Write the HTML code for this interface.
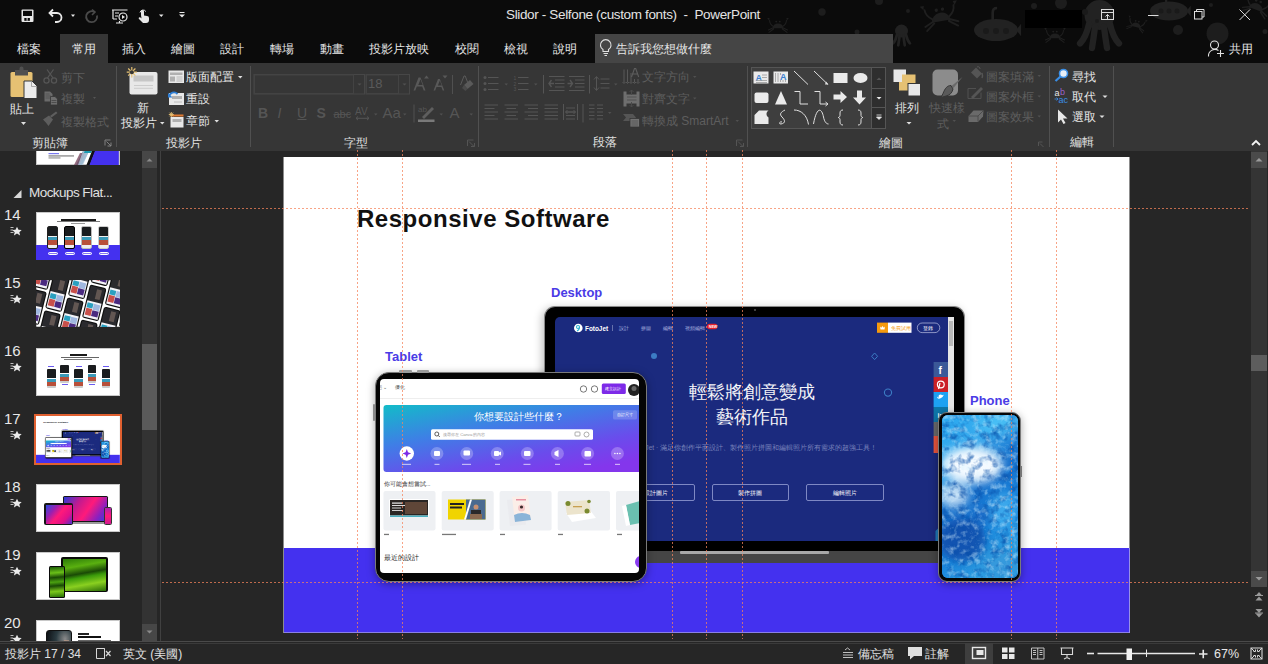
<!DOCTYPE html>
<html><head><meta charset="utf-8">
<style>
*{margin:0;padding:0;box-sizing:border-box}
html,body{width:1268px;height:664px;overflow:hidden;background:#262626;font-family:"Liberation Sans",sans-serif;color:#fff;position:relative}
.a{position:absolute}
.tab{position:absolute;top:41px;font-size:12px;font-weight:350;line-height:17px;color:#e6e6e6;white-space:pre}
.t{position:absolute;font-size:12px;font-weight:350;line-height:17px;color:#e6e6e6;white-space:pre}
.d{color:#5e5e5e}
.glab{position:absolute;top:133px;font-size:12px;font-weight:350;line-height:17px;color:#e0e0e0;white-space:pre}
.sep{position:absolute;top:66px;width:1px;height:81px;background:#505050}
.num{position:absolute;left:4px;font-size:15px;line-height:18px;color:#e8e8e8}
.thumb{position:absolute;left:36px;width:84px;height:47.5px;background:#fff;overflow:hidden;outline:1px solid #c8c8c8;outline-offset:-1px}
.ph{position:absolute;width:11px;height:23px;background:linear-gradient(180deg,#1a1c1e 0 42%,#f0f0f0 42% 48%,#3a9ab8 48% 64%,#b8503a 64% 88%,#eee 88%);border:1.2px solid #222;border-radius:2px}
.pill{position:absolute;top:39.5px;width:10px;height:3px;border:0.8px solid #fff;border-radius:1.5px;background:rgba(255,255,255,.35)}
.ph3{position:absolute;width:8.5px;height:19px;background:linear-gradient(180deg,#1a1c1e 0 45%,#fff 45% 52%,#3a9ab8 52% 66%,#b8503a 66% 90%,#ccc 90%);border-radius:1px}
.ph2{position:absolute;width:8px;height:18px;background:linear-gradient(180deg,#222 0 45%,#eee 45% 50%,#5a9ac0 50% 70%,#b05a7a 70% 90%,#ccc 90%);border:1px solid #444;border-radius:1px}
.lbl{position:absolute;font-size:13px;line-height:17px;font-weight:700;color:#4a3be6;white-space:pre}
.btn{position:absolute;top:166.8px;width:77.5px;height:17.7px;border:1px solid #7e88c4;border-radius:2px;font-size:6.4px;line-height:15.7px;text-align:center;color:#fff;white-space:pre}
</style></head><body>
<!-- TITLE BAR -->
<div class="a" style="left:0;top:0;width:1268px;height:63px;background:#0b0b0b"></div>
<svg class="a" style="left:0;top:0" width="1268" height="63" viewBox="0 0 1268 63">
 <defs>
  <g id="crab">
   <path d="M-9 2 a9 8 0 0 1 18 0z"/>
   <path d="M-8 -1 q-6 -4 -6 -10 M8 -1 q6 -4 6 -10 M-7 1 l-9 4 M-7 3 l-8 6 M7 1 l9 4 M7 3 l8 6" fill="none" stroke-width="1.8" stroke-linecap="round"/>
   <path d="M-15 -11 l-3 -4 l4 0z M15 -11 l3 -4 l-4 0z"/>
   <circle cx="-3" cy="-9" r="1.6"/><circle cx="3" cy="-9" r="1.6"/>
  </g>
  <g id="octo">
   <circle cx="0" cy="0" r="1"/>
   <path d="M-0.7 0.6 q-0.2 0.9 -0.6 1.3 M-0.3 0.8 q-0.1 0.8 -0.2 1.4 M0.3 0.8 q0.1 0.8 0.2 1.4 M0.7 0.6 q0.2 0.9 0.6 1.3" fill="none" stroke-width="0.42" stroke-linecap="round"/>
  </g>
  <g id="sub">
   <ellipse cx="0" cy="0" rx="1" ry="0.5"/>
   <path d="M0.92 0 l0.22 -0.28 v0.56z"/>
   <path d="M-0.15 -0.45 v-0.35 q0 -0.2 0.2 -0.2" fill="none" stroke-width="0.12"/>
  </g>
 </defs>
 <g fill="#1f1f1f" stroke="#1f1f1f" stroke-width="0">
  <use href="#crab" transform="translate(778 27) scale(0.6)"/>
  <use href="#crab" transform="translate(941 19) rotate(-10) scale(1.05)"/>
  <use href="#crab" transform="translate(1055 37) scale(0.6)"/>
  <use href="#crab" transform="translate(1136 26) rotate(15) scale(0.55)"/>
  <use href="#crab" transform="translate(1256 8) rotate(20) scale(0.8)"/>
 </g>
 <g fill="#222" stroke="#222" stroke-width="0">
  <use href="#octo" transform="translate(901.5 31) scale(6.5)"/>
  <use href="#octo" transform="translate(1099.5 15) scale(15)"/>
  <use href="#sub" transform="translate(996 30) scale(22)"/>
  <use href="#sub" transform="translate(1169 11) scale(19)"/>
 </g>
 <g fill="#1a1a1a">
  <circle cx="1085" cy="12" r="3"/><circle cx="1109" cy="12" r="3"/><circle cx="1097" cy="21" r="2"/>
  <circle cx="986" cy="31" r="3"/><circle cx="996" cy="31" r="3"/><circle cx="1006" cy="31" r="3"/>
  <circle cx="1161" cy="11" r="2.5"/><circle cx="1169" cy="11" r="2.5"/><circle cx="1177" cy="11" r="2.5"/>
 </g>
 <g fill="#1d1d1d">
  <circle cx="822" cy="12" r="3.7"/><circle cx="879" cy="1" r="4"/><circle cx="857" cy="32" r="2.5"/><circle cx="908" cy="11" r="2"/>
  <circle cx="1034" cy="6" r="3"/><circle cx="1061" cy="3" r="6"/><circle cx="1178" cy="30" r="5"/><circle cx="1217.5" cy="33.5" r="11"/>
  <circle cx="1211" cy="5" r="2"/><circle cx="1265" cy="31.5" r="2.5"/>
 </g>
</svg>
<!-- QAT -->
<svg class="a" style="left:20px;top:8px" width="170" height="16" viewBox="0 0 170 16">
 <g fill="none" stroke="#e8e8e8" stroke-width="1.3">
  <!-- save -->
  <rect x="1.5" y="1.5" width="12" height="12.5" rx="1" fill="#e8e8e8" stroke="none"/>
  <rect x="3" y="2.8" width="9" height="5.2" fill="#0b0b0b" stroke="none"/>
  <rect x="4.3" y="10" width="5.6" height="2.8" fill="#0b0b0b" stroke="none"/>
  <rect x="6.6" y="10" width="1" height="2.8" fill="#e8e8e8" stroke="none"/>
  <!-- undo -->
  <path d="M30 5 h7 a4.5 4.5 0 0 1 0 9 h-2" stroke-width="1.8"/>
  <path d="M33 1.5 l-3.5 3.5 l3.5 3.5" stroke-width="1.8"/>
  <path d="M51 6.5 h4 l-2 2.5z" fill="#e8e8e8" stroke="none"/>
  <!-- redo gray -->
  <path d="M74.5 4 a5.5 5.5 0 1 0 2.5 3.5" stroke="#4a4a4a" stroke-width="1.8"/>
  <path d="M72 1.5 l3 2.5 l-3 3" stroke="#4a4a4a" stroke-width="1.6"/>
  <!-- presenter -->
  <path d="M92 2 h15.5 M93 2 v9 M93 11 h4 M99.5 13 v2 M96 15 h7" stroke-width="1.2"/>
  <path d="M95 5 h4 M95 8 h3" stroke-width="1"/>
  <circle cx="103" cy="9" r="4" stroke-width="1.2"/>
  <path d="M102 7 v4 l3 -2z" fill="#e8e8e8" stroke="none"/>
  <!-- touch -->
  <path d="M121 7 v-3.5 a1.5 1.5 0 0 1 3 0 v4 l3 0.5 a2 2 0 0 1 2 2 v2 a3 3 0 0 1 -3 3 h-3 l-4 -4 a1 1 0 0 1 1.5 -1.5 l1 1z" fill="#e8e8e8" stroke="none"/>
  <path d="M120 4.5 a3.2 3.2 0 0 1 5.8 -1" stroke-width="1"/>
  <path d="M139 6.5 h4.5 l-2.25 2.5z" fill="#e8e8e8" stroke="none"/>
  <!-- customize -->
  <path d="M159.5 4.5 h5" stroke-width="1"/>
  <path d="M159 6.5 h6 l-3 3z" fill="#e8e8e8" stroke="none"/>
 </g>
</svg>
<div class="a" style="left:506px;top:7px;font-size:13.5px;letter-spacing:-0.35px;color:#e4e4e4;white-space:pre">Slidor - Selfone (custom fonts)  -  PowerPoint</div>
<div class="a" style="left:1025px;top:10px;width:57px;height:18px;background:#000"></div>
<svg class="a" style="left:1095px;top:5px" width="165" height="22" viewBox="0 0 165 22">
 <g fill="none" stroke="#dcdcdc" stroke-width="1">
  <rect x="6.5" y="4.5" width="12" height="10"/>
  <path d="M7 7.5 h11 M12.5 14 v-4.5 M10.5 11.5 l2 -2 l2 2"/>
  <path d="M53 10.5 h10.5"/>
  <rect x="99.5" y="6.5" width="7.5" height="7.5"/>
  <path d="M101.5 6.5 v-2 h7.5 v7.5 h-2"/>
  <path d="M144.5 4.5 l10.5 10.5 M155 4.5 l-10.5 10.5"/>
 </g>
</svg>
<!-- TABS -->
<div class="a" style="left:60px;top:34px;width:48px;height:29px;background:#363636"></div>
<div class="a" style="left:595px;top:34px;width:298px;height:29px;background:#454545"></div>
<div class="tab" style="left:17px">檔案</div>
<div class="tab" style="left:72px">常用</div>
<div class="tab" style="left:122px">插入</div>
<div class="tab" style="left:171px">繪圖</div>
<div class="tab" style="left:220px">設計</div>
<div class="tab" style="left:270px">轉場</div>
<div class="tab" style="left:320px">動畫</div>
<div class="tab" style="left:369px">投影片放映</div>
<div class="tab" style="left:455px">校閱</div>
<div class="tab" style="left:504px">檢視</div>
<div class="tab" style="left:553px">說明</div>
<svg class="a" style="left:598px;top:39px" width="16" height="19" viewBox="0 0 16 19">
 <g fill="none" stroke="#e0e0e0" stroke-width="1.1">
  <path d="M5 12.5 v-2 a5.3 5.3 0 1 1 5.5 0 v2z"/>
  <path d="M5.5 14.5 h4.5 M6.5 16.5 h2.5"/>
 </g>
</svg>
<div class="tab" style="left:616px">告訴我您想做什麼</div>
<svg class="a" style="left:1206px;top:39px" width="20" height="20" viewBox="0 0 20 20">
 <g fill="none" stroke="#e0e0e0" stroke-width="1.1">
  <circle cx="8.5" cy="6" r="4"/>
  <path d="M2.5 17.5 a6.5 6.5 0 0 1 10 -6"/>
  <path d="M14.5 11 v7 M11 14.5 h7"/>
 </g>
</svg>
<div class="tab" style="left:1229px">共用</div>
<!-- RIBBON -->
<div class="a" style="left:0;top:63px;width:1268px;height:88px;background:#363636"></div>
<div class="sep" style="left:116px"></div>
<div class="sep" style="left:250px"></div>
<div class="sep" style="left:478px"></div>
<div class="sep" style="left:747px"></div>
<div class="sep" style="left:1049px"></div>
<div class="sep" style="left:1113px"></div>
<svg class="a" style="left:0;top:63px" width="1268" height="88" viewBox="0 63 1268 88">
 <!-- clipboard paste -->
 <rect x="10.5" y="72" width="22" height="25" rx="1.5" fill="#e6c173"/>
 <path d="M15 70 h4.5 v-1.5 a2 2 0 0 1 4 0 v1.5 h4.5 v5.5 h-13z" fill="#505050"/>
 <path d="M24 81 h8 l5 5 v12.5 h-13z" fill="#ececec" stroke="#363636" stroke-width="1"/>
 <path d="M31.5 81 v5.5 h5.5" fill="none" stroke="#9a9a9a" stroke-width="0.8"/>
 <path d="M21 122 h5 l-2.5 3z" fill="#e0e0e0"/>
 <!-- scissors -->
 <g fill="none" stroke="#555" stroke-width="1.3">
  <circle cx="46.5" cy="80.5" r="2.6"/><circle cx="54" cy="80.5" r="2.6"/>
  <path d="M47.5 78 l6 -8.5 M53 78 l-6 -8.5"/>
 </g>
 <!-- copy -->
 <path d="M44.5 91.5 h5.5 l2.5 2.5 v7.5 h-8z" fill="#6a6a6a"/>
 <path d="M45.5 94 h4 M45.5 96 h5.5 M45.5 98 h5.5" stroke="#4a4a4a" stroke-width="0.7"/>
 <path d="M50.5 96.5 h4.5 l2.5 2.5 v6 h-7z" fill="#6e6e6e" stroke="#363636" stroke-width="0.8"/>
 <path d="M51.5 100.5 h5 M51.5 102.5 h5" stroke="#444" stroke-width="0.8"/>
 <path d="M93 97 h3 l-1.5 2z" fill="#555"/>
 <!-- format painter -->
 <path d="M43 119.5 l6 -4 l4 4 l-4.5 6.5 q-2 -3 -5.5 -6.5z" fill="#5e5e5e"/>
 <path d="M50 116 l1.5 1.5 l6 -4.5 l-1.5 -1.5z" fill="#5e5e5e"/>
 <!-- new slide -->
 <rect x="129.5" y="72" width="28" height="22.5" rx="2" fill="#e8e8e8"/>
 <rect x="133.5" y="75.5" width="20" height="6" fill="#c6c6c6"/>
 <path d="M134 85.5 h19 M134 88.3 h19" stroke="#c8c8c8" stroke-width="0.9"/>
 <g stroke="#e6c173" stroke-width="1.2">
  <path d="M131.8 67 v10.5 M126.7 72.2 h10.2 M128.2 68.5 l7.2 7.2 M135.4 68.5 l-7.2 7.2"/>
 </g>
 <circle cx="131.8" cy="72.2" r="2" fill="#363636"/>
 <path d="M160 122 h4.5 l-2.25 2.5z" fill="#e0e0e0"/>
 <!-- layout -->
 <rect x="168.5" y="70.5" width="15.5" height="12.5" fill="#e8e8e8"/>
 <rect x="170" y="72.5" width="12.5" height="2.5" fill="#b0b0b0"/>
 <rect x="170" y="76.5" width="5" height="5" fill="#b0b0b0"/>
 <path d="M176.5 77 h6 M176.5 79 h6 M176.5 81 h6" stroke="#b0b0b0" stroke-width="0.8"/>
 <path d="M238 76 h4.5 l-2.25 2.5z" fill="#e0e0e0"/>
 <!-- reset -->
 <rect x="169" y="93" width="15" height="12" fill="#e8e8e8"/>
 <rect x="172" y="96" width="10" height="3" fill="#b0b0b0"/>
 <path d="M174 102 h8" stroke="#b0b0b0" stroke-width="0.8"/>
 <path d="M169 96.5 a5 5 0 0 1 8.5 -2.5" fill="none" stroke="#2f7fd6" stroke-width="1.8"/>
 <path d="M168 93 v4.5 h4.5z" fill="#2f7fd6"/>
 <!-- section -->
 <rect x="170.5" y="117" width="13" height="10.5" fill="#e8e8e8"/>
 <rect x="170.5" y="114.5" width="13" height="2" fill="#e07a32"/>
 <rect x="172.5" y="119" width="9" height="3" fill="#b0b0b0"/>
 <g stroke="#e6c173" stroke-width="0.9"><path d="M171.3 112 v5 M168.8 114.5 h5 M169.5 112.7 l3.6 3.6 M173.1 112.7 l-3.6 3.6"/></g>
 <path d="M214.5 120 h4.5 l-2.25 2.5z" fill="#e0e0e0"/>
 <!-- font name / size boxes -->
 <rect x="254" y="74.5" width="110.5" height="19.5" fill="#363636" stroke="#474747" stroke-width="1"/>
 <rect x="254.5" y="75" width="99" height="18.5" fill="none" stroke="#434343" stroke-width="1"/>
 <path d="M357.5 83.5 h4 l-2 2z" fill="#505050"/>
 <rect x="366" y="74.5" width="43.5" height="19.5" fill="#363636" stroke="#474747" stroke-width="1"/>
 <rect x="366.5" y="75" width="32" height="18.5" fill="none" stroke="#434343" stroke-width="1"/>
 <path d="M402.5 83.5 h4 l-2 2z" fill="#505050"/>
 <!-- grow/shrink -->
 <g fill="#585858">
  <path d="M413.5 90.5 l5 -13 h2 l5 13 h-1.8 l-1.5 -4 h-5.4 l-1.5 4z M418.3 85 h4.4 l-2.2 -5.8z"/>
  <path d="M424 78.5 l2.5 -3 l2.5 3z"/>
  <path d="M433.5 90.5 l4.5 -11.5 h1.8 l4.5 11.5 h-1.6 l-1.3 -3.5 h-4.9 l-1.3 3.5z M437.9 85.6 h3.9 l-1.95 -5z"/>
  <path d="M442.5 75.5 h5 l-2.5 3z"/>
 </g>
 <rect x="452" y="75" width="1" height="19" fill="#505050"/>
 <!-- clear formatting -->
 <path d="M460.5 85 l3.5 -9 h1.2 l3.5 9" fill="none" stroke="#5a5a5a" stroke-width="1"/>
 <path d="M464 85 l6 -5 l3.5 4 l-6 5z" fill="#5a5a5a"/>
 <path d="M462 88 l2 -3 l3.5 4 l-2 2z" fill="#4a4a4a"/>
 <!-- B I U S abc AV Aa -->
 <g fill="#555" font-family="Liberation Sans" >
  <text x="258" y="118" font-size="14" font-weight="700">B</text>
  <text x="277.5" y="118" font-size="14" font-style="italic">I</text>
  <text x="297" y="118" font-size="14">U</text>
  <text x="316.5" y="118" font-size="14" font-weight="700">S</text>
  <text x="333.5" y="118" font-size="11">abc</text>
  <text x="355" y="114.5" font-size="10">AV</text>
  <text x="382.5" y="118" font-size="15">Aa</text>
  <text x="449.5" y="118" font-size="15">A</text>
 </g>
 <rect x="297.5" y="119" width="9" height="1" fill="#555"/>
 <path d="M333.5 114.5 h17" stroke="#555" stroke-width="0.8"/>
 <path d="M356 118.3 h13 M356 118.3 l2 -1.8 M356 118.3 l2 1.8 M369 118.3 l-2 -1.8 M369 118.3 l-2 1.8" stroke="#555" stroke-width="1" fill="none"/>
 <g fill="#505050">
  <path d="M374 113.5 h3.5 l-1.75 2z"/><path d="M403 113.5 h3.5 l-1.75 2z"/>
  <path d="M439.5 113.5 h3.5 l-1.75 2z"/><path d="M469.5 113.5 h3.5 l-1.75 2z"/>
 </g>
 <rect x="413.5" y="104.5" width="1" height="18" fill="#505050"/>
 <!-- highlighter -->
 <text x="418" y="112" font-size="8" fill="#555" font-family="Liberation Sans">ab</text>
 <path d="M422 117 l10 -10 l2 2 l-10 10z" fill="#5e5e5e"/>
 <rect x="418" y="119.5" width="16.5" height="2.5" fill="#7a7a7a"/>
 <!-- paragraph: bullets -->
 <g fill="#555">
  <circle cx="485" cy="77.5" r="1.5"/><circle cx="485" cy="83.5" r="1.5"/><circle cx="485" cy="89.5" r="1.5"/>
 </g>
 <g stroke="#555" stroke-width="1" fill="none">
  <path d="M488 77.5 h10.5 M488 83.5 h10.5 M488 89.5 h10.5"/>
  <path d="M518 77.5 h10.5 M518 83.5 h10.5 M518 89.5 h10.5"/>
  <!-- indents -->
  <path d="M549 76.5 h15.5 M555 80 h9.5 M555 83.5 h9.5 M555 87 h9.5 M549 90.5 h15.5"/>
  <path d="M569 76.5 h15.5 M575 80 h9.5 M575 83.5 h9.5 M575 87 h9.5 M569 90.5 h15.5"/>
  <!-- line spacing -->
  <path d="M600.5 79 h9 M600.5 83.5 h9 M600.5 88 h9"/>
  <path d="M596.5 77 v13"/>
  <!-- align -->
  <path d="M484.5 105 h13.5 M484.5 108.5 h10 M484.5 112 h13.5 M484.5 115.5 h10 M484.5 119 h13.5"/>
  <path d="M504.5 105 h13.5 M506.5 108.5 h9.5 M504.5 112 h13.5 M506.5 115.5 h9.5 M504.5 119 h13.5"/>
  <path d="M524.5 105 h13.5 M528 108.5 h10 M524.5 112 h13.5 M528 115.5 h10 M524.5 119 h13.5"/>
  <path d="M544.5 105 h13.5 M544.5 108.5 h13.5 M544.5 112 h13.5 M544.5 115.5 h13.5 M544.5 119 h13.5"/>
  <path d="M563.5 104 v16 M577.5 104 v16 M566 108 h9 M566 112 h9 M566 115.5 h9 M566 119 h9"/>
  <path d="M589 105 h5.5 M589 108.5 h5.5 M589 112 h5.5 M589 115.5 h5.5 M589 119 h5.5 M597 105 h6 M597 108.5 h6 M597 112 h6 M597 115.5 h6 M597 119 h6"/>
  <path d="M543.5 75 v18.5 M589.5 75 v18.5 M583 104 v18.5"/>
 </g>
 <text x="513.5" y="79.5" font-size="5" fill="#555" font-family="Liberation Sans">1</text>
 <text x="513.5" y="85.5" font-size="5" fill="#555" font-family="Liberation Sans">2</text>
 <text x="513.5" y="91" font-size="5" fill="#555" font-family="Liberation Sans">3</text>
 <path d="M551.5 80 l-2.5 3.5 l2.5 3.5 M549 83.5 h5" stroke="#555" stroke-width="1.4" fill="none"/>
 <path d="M570 80 l2.5 3.5 l-2.5 3.5 M567.5 83.5 h5" stroke="#555" stroke-width="1.4" fill="none"/>
 <path d="M594 79.5 l2.5 -3 l2.5 3 M594 87.5 l2.5 3 l2.5 -3" stroke="#555" stroke-width="1" fill="none"/>
 <path d="M565.5 112 h10 M565.5 112 l2 -2 M565.5 112 l2 2 M575.5 112 l-2 -2 M575.5 112 l-2 2" stroke="#555" stroke-width="1" fill="none"/>
 <g fill="#505050">
  <path d="M504.5 83.5 h3.5 l-1.75 2z"/><path d="M534 83.5 h3.5 l-1.75 2z"/><path d="M614 83.5 h3.5 l-1.75 2z"/><path d="M608 112 h3.5 l-1.75 2z"/>
  <path d="M693 76 h3.5 l-1.75 2z"/><path d="M693 97.5 h3.5 l-1.75 2z"/><path d="M735.5 120 h3.5 l-1.75 2z"/>
 </g>
 <!-- text direction -->
 <g stroke="#585858" stroke-width="1" fill="none"><path d="M624 69.5 v13 M627.5 69.5 v13 M631 73 v9.5 M634.5 79 v3.5 M638 79 v3.5"/>
 <path d="M622.5 82 l1.5 1.5 l1.5 -1.5 M626 82 l1.5 1.5 l1.5 -1.5 M629.5 82 l1.5 1.5 l1.5 -1.5 M633 82 l1.5 1.5 l1.5 -1.5 M636.5 82 l1.5 1.5 l1.5 -1.5"/></g>
 <path d="M631.5 77 l3 -8.5 h1.2 l3 8.5 M632.8 74 h4.5" stroke="#5e5e5e" stroke-width="1.1" fill="none"/>
 <!-- align text -->
 <path d="M623.5 91.5 h3 v3 h10 v-3 h3 v15 h-3 v-3 h-10 v3 h-3z" fill="#6e6e6e"/>
 <path d="M627 97 h9.5 M627 100 h9.5" stroke="#4a4a4a" stroke-width="0.8"/>
 <path d="M631.5 90 v5 M629.5 92 l2 -2 l2 2 M631.5 102 v5 M629.5 105 l2 2 l2 -2" stroke="#4a4a4a" stroke-width="1" fill="none"/>
 <!-- smartart -->
 <path d="M623 114 h10 l3 3.5 l-3 3.5 h-10 l3 -3.5z" fill="#555"/>
 <rect x="630" y="118.5" width="9.5" height="8.5" fill="#727272" stroke="#363636" stroke-width="0.8"/>
 <path d="M631.5 121 h6.5 M631.5 123 h6.5 M631.5 125 h6.5" stroke="#505050" stroke-width="0.7"/>
 <!-- launchers -->
 <g fill="none" stroke="#8a8a8a" stroke-width="0.9">
  <path d="M105 145.5 v-5.5 h5.5 M106.5 141.5 l4.5 4.5 M111 142.5 v3.5 h-3.5"/>
 </g>
 <g fill="none" stroke="#585858" stroke-width="0.9">
  <path d="M467.5 146 v-6 h6 M469 141.5 l5 5 M474.5 143 v3.5 h-3.5"/>
  <path d="M736.5 146 v-6 h6 M738 141.5 l5 5 M743.5 143 v3.5 h-3.5"/>
  <path d="M1038.5 146 v-4 h4 M1040 143.5 l3.5 3.5"/>
 </g>
 <!-- shapes gallery -->
 <rect x="751.5" y="67.5" width="134" height="61" fill="#3e3e3e" stroke="#555" stroke-width="1"/>
 <rect x="871.5" y="67.5" width="14" height="61" fill="#2e2e2e" stroke="#555" stroke-width="1"/>
 <path d="M871.5 88.5 h14 M871.5 107.5 h14" stroke="#555"/>
 <path d="M876.5 80 h5 l-2.5 -2.5z" fill="#555"/>
 <path d="M876.5 97 h5 l-2.5 2.5z" fill="#e8e8e8"/>
 <path d="M876.5 115 h5 M876.5 117 h5 l-2.5 2.5z" fill="#e8e8e8" stroke="#e8e8e8" stroke-width="0.8"/>
 <g fill="#eaeaea">
  <rect x="753.5" y="71.5" width="15" height="12"/>
  <rect x="773.5" y="71.5" width="14.5" height="12"/>
  <rect x="833.5" y="73" width="14" height="10"/>
  <ellipse cx="860.5" cy="78" rx="7" ry="5"/>
  <rect x="754.5" y="92.5" width="14" height="10.5" rx="2"/>
  <path d="M775 104.5 l6 -13.5 l6 13.5z"/>
  <path d="M833.5 94.5 h7 v-3.5 l6.5 6 l-6.5 6 v-3.5 h-7z"/>
  <path d="M857 90.5 h5 v7 h4 l-6.5 7 l-6.5 -7 h4z"/>
  <path d="M754.5 124 v-9 l4.5 -4.5 h9.5 a4 4 0 0 0 0 7 v6.5z"/>
 </g>
 <text x="755.5" y="81" font-size="9" font-weight="700" fill="#3a7fd0" font-family="Liberation Sans">A</text>
 <text x="780" y="80" font-size="9" font-weight="700" fill="#3a7fd0" font-family="Liberation Sans">A</text>
 <g stroke="#9a9a9a" stroke-width="0.8" fill="none">
  <path d="M762 75 h5 M762 77.5 h5 M756 80.5 h11 M756 82.5 h11"/>
  <path d="M775.5 73 v9 M778 73 v9 M780.5 73 v2 M780.5 80 v2 M783 80 v2 M785.5 80 v2"/>
 </g>
 <g stroke="#e0e0e0" stroke-width="1" fill="none">
  <path d="M794 71 l14 13.5"/>
  <path d="M814 71 l14 13.5"/>
  <path d="M794.5 91.5 h5.5 v12.5 h8"/>
  <path d="M814.5 91.5 h5.5 v12.5 h7.5 M825.5 102 l2.5 2 l-2.5 2"/>
  <path d="M785 110 c-4 2 -6 4 -3 7 c3 3 4 6 -1 7 c-3 0 -1 -3 1 -2"/>
  <path d="M794 110 c7 0 13 5 14.5 14.5"/>
  <path d="M813.5 124 c3 -17 8 -17 10 -7 c1 5 3 7 5 7"/>
  <path d="M843 110 c-2 0 -3 1 -3 3 v2.5 c0 1 -1 2 -2 2 c1 0 2 1 2 2 v2.5 c0 2 1 3 3 3"/>
  <path d="M858 110 c2 0 3 1 3 3 v2.5 c0 1 1 2 2 2 c-1 0 -2 1 -2 2 v2.5 c0 2 -1 3 -3 3"/>
 </g>
 <path d="M826 81.5 l2.5 3 l-3.5 0z" fill="#e0e0e0"/>
 <!-- arrange -->
 <rect x="893.5" y="69.5" width="12.5" height="12.5" fill="#e8e8e8"/>
 <rect x="902" y="74.5" width="13.5" height="9.5" fill="#e6c173"/>
 <rect x="899" y="83" width="9.5" height="7.5" fill="#e6c173"/>
 <rect x="908" y="83.5" width="12.5" height="12.5" fill="#e8e8e8" stroke="#363636" stroke-width="1"/>
 <rect x="899" y="82" width="3" height="1" fill="#e6c173"/>
 <path d="M906.5 122 h5 l-2.5 2.5z" fill="#e0e0e0"/>
 <!-- quick styles -->
 <rect x="932.5" y="69.5" width="25.5" height="26" rx="5" fill="#8c8c8c"/>
 <path d="M962.5 77 l-9 11 l-2 -2z" fill="#6a6a6a"/>
 <path d="M951 85.5 c-4 0 -6 3 -8 8 l-2 4 l5 -1.5 c4 -1 6 -3 7 -7z" fill="#5a5a5a" stroke="#363636" stroke-width="1"/>
 <path d="M952.5 120 h3.5 l-1.75 2z" fill="#505050"/>
 <!-- fill/outline/effects -->
 <path d="M971 72.5 l5 -5 l6 6 l-5 5z" fill="#555"/>
 <path d="M977 67 a2 2 0 0 1 3 2" fill="none" stroke="#555" stroke-width="1"/>
 <path d="M982 73 q1 3 0 5" fill="none" stroke="#555" stroke-width="1.5"/>
 <path d="M968 98.5 v-10 h8 M968 98.5 h13 v-6" fill="none" stroke="#505050" stroke-width="1"/>
 <path d="M971 97 l10 -10 l2 2 l-10 10z" fill="#555"/>
 <path d="M968.5 116 l5 -5.5 h10 l-0.5 6 l-5 5.5 h-9.5z" fill="#6a6a6a"/>
 <path d="M968.5 116 h9.5 l5.5 -5.5 M978 116 v5.5" fill="none" stroke="#454545" stroke-width="0.8"/>
 <g fill="#505050"><path d="M1037.5 75 h3.5 l-1.75 2z"/><path d="M1037.5 95.5 h3.5 l-1.75 2z"/><path d="M1037.5 115.5 h3.5 l-1.75 2z"/></g>
 <!-- find/replace/select -->
 <circle cx="1063.5" cy="73.5" r="4" fill="#e8eef6" stroke="#3a8ee6" stroke-width="1.6"/>
 <path d="M1060.5 76.5 l-5 4.5" stroke="#3a8ee6" stroke-width="2.2"/>
 <text x="1054.5" y="95.5" font-size="9" fill="#e6e6e6" font-family="Liberation Sans">a</text>
 <text x="1060" y="95" font-size="9" fill="#9a62c8" font-family="Liberation Sans">b</text>
 <text x="1058.5" y="102.5" font-size="9" fill="#3a8ee6" font-family="Liberation Sans">ac</text>
 <path d="M1054.5 99 h3.5 M1056.5 97.5 l1.5 1.5 l-1.5 1.5" stroke="#3a8ee6" stroke-width="0.8" fill="none"/>
 <path d="M1102.5 95.5 h5 l-2.5 2.5z" fill="#e0e0e0"/>
 <path d="M1058 109.5 v13 l3 -3 l2.5 4.5 l2 -1 l-2.5 -4.5 h4.5z" fill="#e8e8e8"/>
 <path d="M1099.5 115.5 h5 l-2.5 2.5z" fill="#e0e0e0"/>
 <!-- collapse ribbon -->
 <path d="M1252 145 l4 -4 l4 4" fill="none" stroke="#f4f4f4" stroke-width="1.8"/>
</svg>
<div class="t" style="left:10px;top:101px">貼上</div>
<div class="t d" style="left:61px;top:70px">剪下</div>
<div class="t d" style="left:61px;top:91px">複製</div>
<div class="t d" style="left:61px;top:113.5px">複製格式</div>
<div class="glab" style="left:32px;top:135px">剪貼簿</div>
<div class="t" style="left:136.5px;top:99.5px">新</div>
<div class="t" style="left:121px;top:115px">投影片</div>
<div class="t" style="left:186px;top:69px">版面配置</div>
<div class="t" style="left:186px;top:91px">重設</div>
<div class="t" style="left:186px;top:113px">章節</div>
<div class="glab" style="left:166px;top:135px">投影片</div>
<div class="a" style="left:368px;top:76px;font-size:13px;line-height:16px;color:#5a5a5a">18</div>
<div class="glab" style="left:344px;top:135px">字型</div>
<div class="t d" style="left:642px;top:69px">文字方向</div>
<div class="t d" style="left:642px;top:91px">對齊文字</div>
<div class="t d" style="left:642px;top:113px">轉換成 SmartArt</div>
<div class="glab" style="left:593px;top:134px">段落</div>
<div class="t" style="left:895px;top:100px">排列</div>
<div class="t d" style="left:928.5px;top:100px">快速樣</div>
<div class="t d" style="left:937px;top:116px">式</div>
<div class="t d" style="left:986px;top:69px">圖案填滿</div>
<div class="t d" style="left:986px;top:88.5px">圖案外框</div>
<div class="t d" style="left:986px;top:108.5px">圖案效果</div>
<div class="glab" style="left:878.5px;top:134.5px">繪圖</div>
<div class="t" style="left:1072px;top:68.5px">尋找</div>
<div class="t" style="left:1072px;top:88.5px">取代</div>
<div class="t" style="left:1072px;top:109px">選取</div>
<div class="glab" style="left:1069.5px;top:134px">編輯</div>
<!-- LEFT PANEL -->
<div class="a" style="left:0;top:151px;width:142px;height:490px;background:#262626;overflow:hidden">
<!-- slide 13 partial -->
 <div class="a" style="left:36px;top:-34.5px;width:84px;height:48.5px;background:#fff;overflow:hidden;outline:1px solid #c8c8c8;outline-offset:-1px">
  <svg class="a" style="left:0;top:0" width="84" height="49" viewBox="0 0 84 49">
   <path d="M40 48 L49 30 H55 L46 48z" fill="#5a8aa8"/>
   <path d="M38 48 L44 36 L49 36 L43 48z" fill="#7a4a60" opacity=".8"/>
   <path d="M47 34 L53 34 L47 48 H42z" fill="#b0c8dc" opacity=".8"/><path d="M50 30 L58 30 L55 36 H48z" fill="#1a9ab0"/>
   <path d="M50.5 48 L57.5 30 H61 L54 48z" fill="#111"/>
   <path d="M53.5 48 L60.5 30 H84 V48z" fill="#4431ef"/>
   <rect x="12.5" y="36" width="10.5" height="1.2" fill="#7a7af0"/>
   <rect x="12.5" y="38.5" width="25.5" height="0.9" fill="#555"/>
   <rect x="12.5" y="40.5" width="12" height="0.9" fill="#777"/>
   <rect x="82.8" y="30" width="1.2" height="19" fill="#c8c8c8"/>
  </svg>
 </div>
 <!-- section -->
 <svg class="a" style="left:13px;top:38px" width="10" height="10" viewBox="0 0 10 10"><path d="M0.5 9 L8.5 1 V9z" fill="#d8d8d8"/></svg>
 <div class="a" style="left:29px;top:33px;font-size:13.5px;letter-spacing:-0.55px;line-height:18px;color:#e0e0e0;white-space:pre">Mockups Flat...</div>
 <!-- numbers -->
 <div class="num" style="top:55px">14</div>
 <div class="num" style="top:123px">15</div>
 <div class="num" style="top:191px">16</div>
 <div class="num" style="top:259px">17</div>
 <div class="num" style="top:327px">18</div>
 <div class="num" style="top:395px">19</div>
 <div class="num" style="top:463px">20</div>
 <svg class="a" style="left:10px;top:74px" width="14" height="420" viewBox="0 0 14 420">
  <defs><g id="star"><path d="M0.5 1.5 h3 M0.5 4 h2.5 M0.5 6.5 h3" stroke="#cfcfcf" stroke-width="0.9"/><path d="M7 0.8 l1.5 3 l3.2 0.3 l-2.4 2.1 l0.8 3.2 l-3.1 -1.8 l-3.1 1.8 l0.8 -3.2 l-2.4 -2.1 l3.2 -0.3z" fill="#eaeaea"/></g></defs>
  <use href="#star" x="0" y="1"/><use href="#star" x="0" y="69"/><use href="#star" x="0" y="137"/><use href="#star" x="0" y="205"/><use href="#star" x="0" y="273"/><use href="#star" x="0" y="341"/><use href="#star" x="0" y="409"/>
 </svg>
 <!-- thumb 14 -->
 <div class="thumb" style="top:61px">
  <div class="a" style="left:0;top:33px;width:84px;height:15px;background:#4431ef"></div>
  <div class="a" style="left:25px;top:6.5px;width:35px;height:2px;background:#1a1a1a"></div>
  <div class="a" style="left:21px;top:9.3px;width:43px;height:1px;background:#777"></div>
  <div class="a" style="left:35px;top:11.3px;width:14px;height:1px;background:#999"></div>
  <div class="ph" style="left:11px;top:14px"></div><div class="ph" style="left:28px;top:14px;border-color:#000;border-width:1.5px"></div><div class="ph" style="left:45px;top:14px;border-color:#bbb"></div><div class="ph" style="left:62px;top:14px;border-color:#ccc"></div>
  <div class="pill" style="left:11.5px"></div><div class="pill" style="left:28.5px"></div><div class="pill" style="left:45.5px"></div><div class="pill" style="left:62.5px"></div>
 </div>
 <!-- thumb 15 -->
 <div class="thumb" style="top:128.5px;background:#fff">
  <svg class="a" style="left:0;top:0" width="84" height="48" viewBox="0 0 84 48">
   <defs>
    <g id="p15">
     <rect x="0" y="0" width="17" height="34" rx="2.5" fill="#111"/>
     <rect x="1.2" y="1.2" width="14.6" height="15" fill="#2a2a2e"/>
     <rect x="8" y="3" width="5" height="10" fill="#7a6a62" opacity="0.7"/>
     <rect x="1.2" y="16" width="14.6" height="16.8" fill="#f4f4f8"/>
     <rect x="2" y="18" width="6" height="5" fill="#2aa0c0"/>
     <rect x="8.5" y="18" width="6.5" height="6" fill="#a0b8e0"/>
     <rect x="2" y="23.5" width="6" height="7" fill="#c8504a"/>
     <rect x="8.5" y="24.5" width="6.5" height="6" fill="#4a2a80"/>
    </g>
   </defs>
   <g transform="translate(42 24) rotate(14) translate(-50 -40)">
<use href="#p15" x="-38" y="-72"/>
<use href="#p15" x="-38" y="-36"/>
<use href="#p15" x="-38" y="0"/>
<use href="#p15" x="-38" y="36"/>
<use href="#p15" x="-38" y="72"/>
<use href="#p15" x="-38" y="108"/>
<use href="#p15" x="-19" y="-54"/>
<use href="#p15" x="-19" y="-18"/>
<use href="#p15" x="-19" y="18"/>
<use href="#p15" x="-19" y="54"/>
<use href="#p15" x="-19" y="90"/>
<use href="#p15" x="-19" y="126"/>
<use href="#p15" x="0" y="-72"/>
<use href="#p15" x="0" y="-36"/>
<use href="#p15" x="0" y="0"/>
<use href="#p15" x="0" y="36"/>
<use href="#p15" x="0" y="72"/>
<use href="#p15" x="0" y="108"/>
<use href="#p15" x="19" y="-54"/>
<use href="#p15" x="19" y="-18"/>
<use href="#p15" x="19" y="18"/>
<use href="#p15" x="19" y="54"/>
<use href="#p15" x="19" y="90"/>
<use href="#p15" x="19" y="126"/>
<use href="#p15" x="38" y="-72"/>
<use href="#p15" x="38" y="-36"/>
<use href="#p15" x="38" y="0"/>
<use href="#p15" x="38" y="36"/>
<use href="#p15" x="38" y="72"/>
<use href="#p15" x="38" y="108"/>
<use href="#p15" x="57" y="-54"/>
<use href="#p15" x="57" y="-18"/>
<use href="#p15" x="57" y="18"/>
<use href="#p15" x="57" y="54"/>
<use href="#p15" x="57" y="90"/>
<use href="#p15" x="57" y="126"/>
<use href="#p15" x="76" y="-72"/>
<use href="#p15" x="76" y="-36"/>
<use href="#p15" x="76" y="0"/>
<use href="#p15" x="76" y="36"/>
<use href="#p15" x="76" y="72"/>
<use href="#p15" x="76" y="108"/>
<use href="#p15" x="95" y="-54"/>
<use href="#p15" x="95" y="-18"/>
<use href="#p15" x="95" y="18"/>
<use href="#p15" x="95" y="54"/>
<use href="#p15" x="95" y="90"/>
<use href="#p15" x="95" y="126"/>
<use href="#p15" x="114" y="-72"/>
<use href="#p15" x="114" y="-36"/>
<use href="#p15" x="114" y="0"/>
<use href="#p15" x="114" y="36"/>
<use href="#p15" x="114" y="72"/>
<use href="#p15" x="114" y="108"/>
   </g>
  </svg>
 </div>
 <!-- thumb 16 -->
 <div class="thumb" style="top:197px">
  <div class="a" style="left:34px;top:6px;width:17px;height:2px;background:#1a1a1a"></div>
  <div class="a" style="left:25px;top:9px;width:38px;height:1px;background:#666"></div>
  <div class="a" style="left:28px;top:11px;width:28px;height:1px;background:#777"></div>
  <div class="a" style="left:12px;top:17.5px;width:6px;height:1.2px;background:#6a5af0"></div>
  <div class="a" style="left:40px;top:17.5px;width:6px;height:1.2px;background:#6a5af0"></div>
  <div class="a" style="left:67px;top:17.5px;width:6px;height:1.2px;background:#6a5af0"></div>
  <div class="a" style="left:26px;top:36px;width:6px;height:1.2px;background:#6a5af0"></div>
  <div class="a" style="left:53px;top:36px;width:6px;height:1.2px;background:#6a5af0"></div>
  <div class="ph3" style="left:11px;top:21px"></div><div class="ph3" style="left:24px;top:17px;height:17.5px"></div><div class="ph3" style="left:38px;top:21px"></div><div class="ph3" style="left:51.5px;top:17px;height:17.5px"></div><div class="ph3" style="left:65.5px;top:21px"></div>
 </div>
 <!-- thumb 17 selected -->
 <div class="a" style="left:34px;top:262.5px;width:88px;height:51px;border:2px solid #e06030;background:#fff"></div>
 <div class="thumb" style="top:265px;height:47.3px;outline:none">
<div class="a" style="left:0;top:0;width:1268px;height:664px;transform-origin:0 0;transform:scale(0.09929) translate(-284px,-157px)">
<!-- MAIN SLIDE -->
<div class="a" style="left:283px;top:157px;width:847px;height:476px;background:#8c8c8c"></div>
<div class="a" style="left:284px;top:632px;width:846px;height:1px;background:#8a80e6"></div>
<div class="a" style="left:1129px;top:548px;width:1px;height:85px;background:#9890e8"></div>
<div class="a" style="left:284px;top:157px;width:845px;height:475px;background:#fff;overflow:hidden">
 <div class="a" style="left:0;top:391px;width:845px;height:84px;background:#4431ef"></div>
</div>
<div class="a" style="left:357px;top:203.5px;font-size:24px;line-height:30px;font-weight:700;letter-spacing:0.53px;color:#111;white-space:pre">Responsive Software</div>
<div class="lbl" style="left:551px;top:284px">Desktop</div>
<div class="lbl" style="left:385px;top:348px">Tablet</div>
<div class="lbl" style="left:970px;top:392px">Phone</div>

<!-- LAPTOP -->
<div class="a" style="left:544px;top:305.5px;width:421px;height:245.5px;background:#000;border:1px solid #8a8a8a;border-bottom:none;border-radius:11px 11px 0 0;box-shadow:-2px 2px 9px rgba(0,0,0,.25)"></div>
<div class="a" style="left:754px;top:309px;width:2px;height:2px;border-radius:1px;background:#555"></div>
<div class="a" style="left:544px;top:550.5px;width:421px;height:12.5px;background:#454545"></div>
<div class="a" style="left:680px;top:551px;width:149px;height:2.5px;background:#a8a8a8;border-radius:1px"></div>
<div class="a" style="left:555px;top:317px;width:393px;height:224px;background:#1b2a7e;overflow:hidden;border-radius:5px 0 0 0">
 <svg class="a" style="left:0;top:0" width="393" height="224" viewBox="555 317 393 224">
  <circle cx="578.3" cy="328" r="4.3" fill="#fff"/>
  <circle cx="578" cy="327" r="1.5" fill="none" stroke="#2ab0d0" stroke-width="1.1"/><path d="M579.5 327 q0 3 -2.5 4" fill="none" stroke="#2ab0d0" stroke-width="1.1"/>
  <text x="585" y="331" font-size="6.4" font-weight="700" fill="#fff" font-family="Liberation Sans">FotoJet</text>
  <rect x="612" y="325" width="0.8" height="6" fill="#7a84b8"/>
  <rect x="707" y="323.7" width="10.5" height="5.5" rx="2.7" fill="#e8202a"/>
  <text x="708.8" y="328" font-size="3.6" font-weight="700" fill="#fff" font-family="Liberation Sans">NEW</text>
  <circle cx="654" cy="356" r="3" fill="#3c7cc4"/>
  <path d="M874.6 353 l3 3.3 l-3 3.3 l-3 -3.3z" fill="none" stroke="#3c7cc4" stroke-width="1"/>
  <circle cx="888" cy="392.6" r="3.6" fill="none" stroke="#3c7cc4" stroke-width="1.1"/>
  <rect x="877" y="322.6" width="11" height="10.2" fill="#f59a0e"/>
  <rect x="888" y="322.6" width="23.5" height="10.2" fill="#fff"/>
  <path d="M880.5 329.5 h4 l0.5 -3 l-1.2 1.2 l-1.3 -1.8 l-1.3 1.8 l-1.2 -1.2z" fill="#fff"/>
  <rect x="917.3" y="323" width="22.5" height="9.6" rx="4.8" fill="none" stroke="#aab0d8" stroke-width="0.8"/>
  <path d="M935.5 531 l12.5 -12.5 v22.5 h-12.5z" fill="#1f7ab8"/>
  <rect x="933.6" y="362" width="14.4" height="15" fill="#3b5998"/>
  <rect x="933.6" y="377" width="14.4" height="15" fill="#cb2027"/>
  <rect x="933.6" y="392" width="14.4" height="15" fill="#1da1f2"/>
  <rect x="933.6" y="407" width="14.4" height="15" fill="#0e76a8"/>
  <rect x="933.6" y="422" width="14.4" height="14" fill="#6a6a6a"/>
  <rect x="933.6" y="436" width="14.4" height="17" fill="#e8553e"/>
  <text x="938.5" y="374" font-size="10" font-weight="700" fill="#fff" font-family="Liberation Sans">f</text>
  <circle cx="940.8" cy="384.5" r="3.4" fill="none" stroke="#fff" stroke-width="1.2"/>
  <path d="M940 383 l-1.5 6" stroke="#fff" stroke-width="1.1"/>
  <path d="M937 398 q2 1.5 4 0 q2 -1 3 -3.5 q-1 1 -2 0.5 q-1.5 -1 -3 0 q-1 1 0 2.5 q-1.5 0 -2 -1 q0 1.5 1 2z" fill="#fff"/>
  <text x="937.5" y="418" font-size="7" font-weight="700" fill="#fff" font-family="Liberation Sans">in</text>
 </svg>
 <div class="a" style="left:63.5px;top:7px;font-size:5.4px;line-height:8px;color:#aeb6e0;white-space:pre">設計</div>
 <div class="a" style="left:86px;top:7px;font-size:5.4px;line-height:8px;color:#aeb6e0;white-space:pre">拼圖</div>
 <div class="a" style="left:107.5px;top:7px;font-size:5.4px;line-height:8px;color:#aeb6e0;white-space:pre">編輯</div>
 <div class="a" style="left:129.5px;top:7px;font-size:5.4px;line-height:8px;color:#aeb6e0;white-space:pre">視頻編輯</div>
 <div class="a" style="left:336px;top:8px;font-size:5px;line-height:6px;color:#f59a0e;white-space:pre">免費試用</div>
 <div class="a" style="left:368px;top:8px;font-size:5px;line-height:6px;color:#fff;white-space:pre">登錄</div>
 <div class="a" style="left:0.5px;top:63px;width:393px;text-align:center;font-size:17.9px;line-height:25px;font-weight:300;color:#f4f4f8;white-space:pre">輕鬆將創意變成
藝術作品</div>
 <div class="a" style="left:32px;top:125.5px;width:290px;font-size:6.6px;line-height:9px;color:#7a84bc;white-space:pre;text-align:right">使用 FotoJet · 滿足你創作平面設計、製作照片拼圖和編輯照片所有需求的超強工具！</div>
 <div class="btn" style="left:62.5px">設計圖片</div>
 <div class="btn" style="left:156.7px">製作拼圖</div>
 <div class="btn" style="left:251.3px">編輯照片</div>
</div>
<div class="a" style="left:948px;top:317px;width:6px;height:224px;background:#e6e6e6"></div>
<div class="a" style="left:948.5px;top:321px;width:4.5px;height:25px;background:#b8b8b8"></div>

<!-- TABLET -->
<div class="a" style="left:374.5px;top:372px;width:272.5px;height:210px;background:#050505;border:1px solid #7a7a7a;border-radius:14px;box-shadow:0 2px 8px rgba(0,0,0,.35)"></div>
<div class="a" style="left:398.5px;top:370px;width:13.5px;height:2.5px;background:#9a9a9a;border-radius:1px"></div>
<div class="a" style="left:417px;top:370px;width:12px;height:2.5px;background:#9a9a9a;border-radius:1px"></div>
<div class="a" style="left:372.5px;top:404px;width:2px;height:17px;background:#8a8a8a;border-radius:1px"></div>
<div class="a" style="left:380px;top:379px;width:259px;height:194px;background:#fff;overflow:hidden;border-radius:4px">
 <svg class="a" style="left:0;top:0" width="259" height="194" viewBox="380 379 259 194">
  <defs>
   <linearGradient id="tg" x1="0" y1="0" x2="0.75" y2="1"><stop offset="0" stop-color="#12bcc8"/><stop offset="0.4" stop-color="#3f7ee6"/><stop offset="0.75" stop-color="#6a4cec"/><stop offset="1" stop-color="#8436ec"/></linearGradient>
  </defs>
  <rect x="380" y="398" width="259" height="1" fill="#eee"/>
  <circle cx="583.5" cy="389" r="3.2" fill="none" stroke="#555" stroke-width="0.8"/>
  <circle cx="594.5" cy="389" r="3.2" fill="none" stroke="#555" stroke-width="0.8"/>
  <rect x="601.8" y="383.6" width="24" height="10.4" rx="1.5" fill="#7d2ae8"/>
  <circle cx="634" cy="390" r="6" fill="#222"/>
  <circle cx="634" cy="388.5" r="2.5" fill="#666"/>
  <rect x="383.5" y="405" width="258" height="67" rx="3" fill="url(#tg)"/>
  <rect x="613" y="410.2" width="24" height="9.4" rx="1.5" fill="#fff" fill-opacity="0.18"/>
  <rect x="431" y="429.3" width="162" height="10.4" rx="1.5" fill="#fff"/>
  <circle cx="436.8" cy="434" r="2" fill="none" stroke="#333" stroke-width="0.8"/>
  <path d="M438.3 435.5 l1.5 1.5" stroke="#333" stroke-width="0.8"/>
  <rect x="575" y="432" width="5" height="4" rx="0.8" fill="none" stroke="#777" stroke-width="0.6"/>
  <circle cx="586.5" cy="434.5" r="2.5" fill="none" stroke="#777" stroke-width="0.6"/>
  <circle cx="406.8" cy="453.5" r="7.2" fill="#fff"/>
  <path d="M406.8 449 l1.2 3.2 l3.2 1.3 l-3.2 1.3 l-1.2 3.2 l-1.2 -3.2 l-3.2 -1.3 l3.2 -1.3z" fill="#7d2ae8"/>
  <g fill="#fff" fill-opacity="0.25">
   <circle cx="436.9" cy="453.5" r="6.5"/><circle cx="466.7" cy="453.5" r="6.5"/><circle cx="497.2" cy="453.5" r="6.5"/><circle cx="527.3" cy="453.5" r="6.5"/><circle cx="557.4" cy="453.5" r="6.5"/><circle cx="587.6" cy="453.5" r="6.5"/><circle cx="617.4" cy="453.5" r="6.5"/>
  </g>
  <g fill="#fff">
   <rect x="434" y="451" width="6" height="5" rx="1"/>
   <rect x="463.5" y="450.5" width="6.5" height="5" rx="1"/>
   <rect x="494" y="451" width="5" height="5" rx="1"/><path d="M499 452.5 l2 -1 v4 l-2 -1z"/>
   <rect x="524" y="451" width="6.5" height="5" rx="1"/>
   <path d="M554.5 452 l4 -2 v7 l-4 -2z"/>
   <rect x="584.5" y="451" width="6.5" height="5.5" rx="1"/>
   <circle cx="614.9" cy="453.5" r="0.8"/><circle cx="617.4" cy="453.5" r="0.8"/><circle cx="619.9" cy="453.5" r="0.8"/>
  </g>
  <g fill="#fff" fill-opacity="0.6">
   <rect x="402" y="463.8" width="9" height="1.2"/><rect x="434.5" y="463.8" width="5" height="1.2"/><rect x="462" y="463.8" width="9" height="1.2"/><rect x="495" y="463.8" width="5" height="1.2"/><rect x="523.5" y="463.8" width="7" height="1.2"/><rect x="555" y="463.8" width="5" height="1.2"/><rect x="584" y="463.8" width="7" height="1.2"/><rect x="615" y="463.8" width="5" height="1.2"/>
  </g>
  <g fill="#eef0f3">
   <rect x="383.5" y="491" width="52" height="39.5" rx="2"/><rect x="441.7" y="491" width="52" height="39.5" rx="2"/><rect x="499.6" y="491" width="52" height="39.5" rx="2"/><rect x="557.7" y="491" width="52.3" height="39.5" rx="2"/><rect x="616" y="491" width="52" height="39.5" rx="2"/>
  </g>
  <rect x="389" y="499" width="40" height="18" rx="1.5" fill="#fff"/>
  <rect x="390" y="500" width="38" height="15.5" fill="#2a2624"/>
  <rect x="405" y="502" width="22" height="12" fill="#8a6048" opacity="0.55"/>
  <rect x="392" y="502.5" width="10" height="1.2" fill="#eee"/><rect x="392" y="505" width="13" height="1" fill="#ddd"/><rect x="392" y="507.5" width="9" height="1" fill="#ccc"/><rect x="392" y="510" width="11" height="1" fill="#ccc"/>
  <rect x="390" y="515.5" width="38" height="1.5" fill="#4ab0c0"/>
  <rect x="448" y="499.5" width="37.5" height="20" fill="#f0d400"/>
  <rect x="466" y="499.5" width="19.5" height="20" fill="#4a6a90"/>
  <path d="M466 519.5 l6 -20 h-2 l-6 20z" fill="#fff"/>
  <circle cx="476" cy="507" r="2.5" fill="#c89070"/><rect x="471" y="510" width="10" height="9" fill="#2a2a2a"/>
  <rect x="470" y="514" width="12" height="5" fill="#8a6a50"/>
  <rect x="450" y="503" width="14" height="2" fill="#222"/><rect x="450" y="506.5" width="12" height="2" fill="#222"/>
  <path d="M507 500 l16 -1.5 l3 26 l-16 1.5z" fill="#e8e8ec" opacity="0.7"/>
  <path d="M512 497 l16 -2 l3 25 l-16 2z" fill="#fbeee8"/>
  <circle cx="521.5" cy="508" r="3.5" fill="#f4c8c8"/><circle cx="521.5" cy="507" r="1.6" fill="#3a2a2a"/>
  <path d="M514 515 q8 -4 16 0 l1 5 l-16 2z" fill="#8ab4d8"/>
  <rect x="516" y="499" width="10" height="1.5" fill="#e890a0"/>
  <path d="M566 513 l24 -3 l6 8 l-24 4z" fill="#fff" opacity="0.95"/>
  <path d="M565 502 l24 -2 l2 13 l-24 2z" fill="#ece4cc"/>
  <circle cx="568" cy="503.5" r="2.5" fill="#7a8a30"/><circle cx="587" cy="511" r="2.5" fill="#7a8a30"/><circle cx="589" cy="501.5" r="1.8" fill="#7a8a30"/>
  <rect x="573" y="506" width="9" height="1.3" fill="#c8a050"/>
  <path d="M626 505 l14 -4 v22 l-10 2z" fill="#6ac0b0"/>
  <path d="M622 506 l4 -1 l4 20 l-4 1z" fill="#fff"/>
  <g fill="#777">
   <rect x="384" y="533.8" width="5" height="1.3"/><rect x="442" y="533.8" width="14" height="1.3"/><rect x="500" y="533.8" width="5" height="1.3"/><rect x="558" y="533.8" width="5" height="1.3"/><rect x="617" y="533.8" width="5" height="1.3"/>
  </g>
  <circle cx="641" cy="562" r="6" fill="#8a3cf0"/>
 </svg>
 <div class="a" style="left:-3px;top:6px;font-size:4.5px;line-height:6px;color:#555;white-space:pre">宅 ⌄      優化</div>
 <div class="a" style="left:225px;top:6.5px;font-size:4px;line-height:5px;color:#fff;white-space:pre">建立設計</div>
 <div class="a" style="left:94px;top:32px;font-size:9.6px;line-height:12px;color:#fff;white-space:pre">你想要設計些什麼？</div>
 <div class="a" style="left:236.5px;top:32.5px;font-size:4px;line-height:5px;color:#fff;white-space:pre">自訂尺寸</div>
 <div class="a" style="left:63px;top:52.5px;font-size:4.2px;line-height:5px;color:#999;white-space:pre">搜尋你在 Canva 的內容</div>
 <div class="a" style="left:3.5px;top:101px;font-size:6px;line-height:8px;color:#333;white-space:pre">你可能會想嘗試...</div>
 <div class="a" style="left:3.5px;top:173.5px;font-size:7.2px;line-height:9px;color:#222;font-weight:500;white-space:pre">最近的設計</div>
</div>

<!-- PHONE -->
<div class="a" style="left:937.5px;top:411.5px;width:83px;height:170.5px;background:#060606;border:1px solid #7a7a7a;border-radius:9px;box-shadow:0 2px 8px rgba(0,0,0,.35)"></div>
<div class="a" style="left:1020px;top:465.5px;width:2px;height:11px;background:#777"></div>
<div class="a" style="left:941.5px;top:415px;width:76px;height:163px;border-radius:6px;overflow:hidden;background:#1a80d8">
 <svg width="76" height="163" viewBox="0 0 76 163">
  <defs>
   <filter id="ice" x="0" y="0" width="100%" height="100%" color-interpolation-filters="sRGB">
    <feTurbulence type="fractalNoise" baseFrequency="0.16" numOctaves="3" seed="5" result="n"/>
    <feColorMatrix type="matrix" values="0 0 0 0 0.85  0 0 0 0 0.95  0 0 0 0 1  2.6 0 0 0 -1.25" in="n"/>
   </filter>
   <filter id="ice2" x="0" y="0" width="100%" height="100%" color-interpolation-filters="sRGB">
    <feTurbulence type="fractalNoise" baseFrequency="0.12" numOctaves="3" seed="9" result="n"/>
    <feColorMatrix type="matrix" values="0 0 0 0 0.02  0 0 0 0 0.3  0 0 0 0 0.66  2.0 0 0 0 -0.95" in="n"/>
   </filter>
   <filter id="bl"><feGaussianBlur stdDeviation="5"/></filter>
   <linearGradient id="pg" x1="0" y1="0" x2="0.4" y2="1">
    <stop offset="0" stop-color="#2aaaf0"/><stop offset="0.3" stop-color="#38a8ec"/><stop offset="0.55" stop-color="#1670cc"/><stop offset="0.8" stop-color="#1a86dc"/><stop offset="1" stop-color="#2a9ae0"/>
   </linearGradient>
  </defs>
  <rect width="76" height="163" fill="url(#pg)"/>
  <g filter="url(#bl)">
   <ellipse cx="30" cy="50" rx="30" ry="18" fill="#f4faff" opacity="1"/>
   <ellipse cx="12" cy="80" rx="14" ry="12" fill="#e8f4fc" opacity="0.8"/>
   <ellipse cx="55" cy="8" rx="22" ry="10" fill="#50c8f8" opacity="0.7"/>
   <ellipse cx="20" cy="125" rx="24" ry="22" fill="#0a48a8" opacity="0.8"/>
   <ellipse cx="62" cy="95" rx="12" ry="18" fill="#48b8f4" opacity="0.7"/>
   <ellipse cx="58" cy="150" rx="18" ry="12" fill="#3a98d8" opacity="0.6"/>
   <ellipse cx="40" cy="100" rx="10" ry="8" fill="#1a60c0" opacity="0.6"/>
  </g>
  <rect width="76" height="163" filter="url(#ice2)"/>
  <rect width="76" height="163" filter="url(#ice)" opacity="0.55"/>
 </svg>
</div>

</div></div>

 <!-- thumb 18 -->
 <div class="thumb" style="top:333px">
  <div class="a" style="left:27px;top:12px;width:44.6px;height:26px;background:#151515;border-radius:1.5px"></div>
  <div class="a" style="left:28px;top:13px;width:42.6px;height:24px;background:linear-gradient(125deg,#2a3ad8 0%,#c01a90 30%,#ff1a7a 55%,#8a20c0 80%,#2a40e0 100%)"></div>
  <div class="a" style="left:26px;top:37.5px;width:46px;height:2.5px;background:#9a9a9a;border-radius:0 0 2px 2px"></div>
  <div class="a" style="left:8.4px;top:19.4px;width:28.6px;height:21.6px;background:#151515;border-radius:2px"></div>
  <div class="a" style="left:9.6px;top:20.6px;width:26.2px;height:19.2px;background:linear-gradient(130deg,#2a4ae0 0%,#9a20b0 28%,#ff1a7a 50%,#e0108a 75%,#4a30d0 100%)"></div>
  <div class="a" style="left:67.6px;top:23.4px;width:8.7px;height:17.6px;background:linear-gradient(180deg,#b020b0,#ff1a7a 50%,#d01a90);border:0.8px solid #333;border-radius:1.5px"></div>
 </div>
 <!-- thumb 19 -->
 <div class="thumb" style="top:401px">
  <div class="a" style="left:25px;top:5.4px;width:46.5px;height:35px;background:#0a0a0a;border-radius:2px"></div>
  <div class="a" style="left:26.5px;top:7px;width:43.5px;height:32px;background:linear-gradient(170deg,#2a7a08 0%,#5ab010 25%,#1a4a06 45%,#3a9a0a 55%,#8ad020 75%,#2a6a08 100%)"></div>
  <div class="a" style="left:12.8px;top:13.8px;width:16.4px;height:32px;background:#0a0a0a;border-radius:1.5px"></div>
  <div class="a" style="left:13.8px;top:15px;width:14.4px;height:29.7px;background:linear-gradient(175deg,#1a5a06 0%,#6ac018 20%,#1a4a06 35%,#4aa010 50%,#1a4a06 62%,#7ac81a 80%,#2a7008 100%)"></div>
 </div>
 <!-- thumb 20 -->
 <div class="thumb" style="top:469px">
  <div class="a" style="left:10px;top:10px;width:26px;height:34px;background:radial-gradient(ellipse at 75% 25%,#8a8a8a 0,#2a3a40 35%,#101418 70%);border-radius:3px;border:0.8px solid #111"></div>
  <div class="a" style="left:28px;top:20px;width:5px;height:18px;background:#c8a088;opacity:.6"></div>
  <div class="a" style="left:42.4px;top:13.3px;width:11px;height:1.6px;background:#222"></div>
  <div class="a" style="left:42.4px;top:16.3px;width:23px;height:2px;background:#111"></div>
  <div class="a" style="left:42.4px;top:20px;width:33px;height:1px;background:#666"></div>
  <div class="a" style="left:42.4px;top:22px;width:10px;height:1px;background:#666"></div>
 </div>
</div>
<!-- thumbnails scrollbar -->
<div class="a" style="left:142px;top:151px;width:15px;height:490px;background:#333"></div>
<div class="a" style="left:142px;top:151px;width:15px;height:17px;background:#474747"></div>
<div class="a" style="left:142px;top:624px;width:15px;height:17px;background:#474747"></div>
<div class="a" style="left:142px;top:344px;width:15px;height:86px;background:#5a5a5a"></div>
<svg class="a" style="left:142px;top:151px" width="15" height="490" viewBox="0 0 15 490">
 <path d="M4.5 10.5 l3 -3 l3 3z" fill="#8a8a8a"/>
 <path d="M4.5 479.5 l3 3 l3 -3z" fill="#8a8a8a"/>
</svg>
<div class="a" style="left:160px;top:151px;width:1px;height:490px;background:#404040"></div>
<!-- MAIN SLIDE -->
<div class="a" style="left:283px;top:157px;width:847px;height:476px;background:#8c8c8c"></div>
<div class="a" style="left:284px;top:632px;width:846px;height:1px;background:#8a80e6"></div>
<div class="a" style="left:1129px;top:548px;width:1px;height:85px;background:#9890e8"></div>
<div class="a" style="left:284px;top:157px;width:845px;height:475px;background:#fff;overflow:hidden">
 <div class="a" style="left:0;top:391px;width:845px;height:84px;background:#4431ef"></div>
</div>
<div class="a" style="left:357px;top:203.5px;font-size:24px;line-height:30px;font-weight:700;letter-spacing:0.53px;color:#111;white-space:pre">Responsive Software</div>
<div class="lbl" style="left:551px;top:284px">Desktop</div>
<div class="lbl" style="left:385px;top:348px">Tablet</div>
<div class="lbl" style="left:970px;top:392px">Phone</div>

<!-- LAPTOP -->
<div class="a" style="left:544px;top:305.5px;width:421px;height:245.5px;background:#000;border:1px solid #8a8a8a;border-bottom:none;border-radius:11px 11px 0 0;box-shadow:-2px 2px 9px rgba(0,0,0,.25)"></div>
<div class="a" style="left:754px;top:309px;width:2px;height:2px;border-radius:1px;background:#555"></div>
<div class="a" style="left:544px;top:550.5px;width:421px;height:12.5px;background:#454545"></div>
<div class="a" style="left:680px;top:551px;width:149px;height:2.5px;background:#a8a8a8;border-radius:1px"></div>
<div class="a" style="left:555px;top:317px;width:393px;height:224px;background:#1b2a7e;overflow:hidden;border-radius:5px 0 0 0">
 <svg class="a" style="left:0;top:0" width="393" height="224" viewBox="555 317 393 224">
  <circle cx="578.3" cy="328" r="4.3" fill="#fff"/>
  <circle cx="578" cy="327" r="1.5" fill="none" stroke="#2ab0d0" stroke-width="1.1"/><path d="M579.5 327 q0 3 -2.5 4" fill="none" stroke="#2ab0d0" stroke-width="1.1"/>
  <text x="585" y="331" font-size="6.4" font-weight="700" fill="#fff" font-family="Liberation Sans">FotoJet</text>
  <rect x="612" y="325" width="0.8" height="6" fill="#7a84b8"/>
  <rect x="707" y="323.7" width="10.5" height="5.5" rx="2.7" fill="#e8202a"/>
  <text x="708.8" y="328" font-size="3.6" font-weight="700" fill="#fff" font-family="Liberation Sans">NEW</text>
  <circle cx="654" cy="356" r="3" fill="#3c7cc4"/>
  <path d="M874.6 353 l3 3.3 l-3 3.3 l-3 -3.3z" fill="none" stroke="#3c7cc4" stroke-width="1"/>
  <circle cx="888" cy="392.6" r="3.6" fill="none" stroke="#3c7cc4" stroke-width="1.1"/>
  <rect x="877" y="322.6" width="11" height="10.2" fill="#f59a0e"/>
  <rect x="888" y="322.6" width="23.5" height="10.2" fill="#fff"/>
  <path d="M880.5 329.5 h4 l0.5 -3 l-1.2 1.2 l-1.3 -1.8 l-1.3 1.8 l-1.2 -1.2z" fill="#fff"/>
  <rect x="917.3" y="323" width="22.5" height="9.6" rx="4.8" fill="none" stroke="#aab0d8" stroke-width="0.8"/>
  <path d="M935.5 531 l12.5 -12.5 v22.5 h-12.5z" fill="#1f7ab8"/>
  <rect x="933.6" y="362" width="14.4" height="15" fill="#3b5998"/>
  <rect x="933.6" y="377" width="14.4" height="15" fill="#cb2027"/>
  <rect x="933.6" y="392" width="14.4" height="15" fill="#1da1f2"/>
  <rect x="933.6" y="407" width="14.4" height="15" fill="#0e76a8"/>
  <rect x="933.6" y="422" width="14.4" height="14" fill="#6a6a6a"/>
  <rect x="933.6" y="436" width="14.4" height="17" fill="#e8553e"/>
  <text x="938.5" y="374" font-size="10" font-weight="700" fill="#fff" font-family="Liberation Sans">f</text>
  <circle cx="940.8" cy="384.5" r="3.4" fill="none" stroke="#fff" stroke-width="1.2"/>
  <path d="M940 383 l-1.5 6" stroke="#fff" stroke-width="1.1"/>
  <path d="M937 398 q2 1.5 4 0 q2 -1 3 -3.5 q-1 1 -2 0.5 q-1.5 -1 -3 0 q-1 1 0 2.5 q-1.5 0 -2 -1 q0 1.5 1 2z" fill="#fff"/>
  <text x="937.5" y="418" font-size="7" font-weight="700" fill="#fff" font-family="Liberation Sans">in</text>
 </svg>
 <div class="a" style="left:63.5px;top:7px;font-size:5.4px;line-height:8px;color:#aeb6e0;white-space:pre">設計</div>
 <div class="a" style="left:86px;top:7px;font-size:5.4px;line-height:8px;color:#aeb6e0;white-space:pre">拼圖</div>
 <div class="a" style="left:107.5px;top:7px;font-size:5.4px;line-height:8px;color:#aeb6e0;white-space:pre">編輯</div>
 <div class="a" style="left:129.5px;top:7px;font-size:5.4px;line-height:8px;color:#aeb6e0;white-space:pre">視頻編輯</div>
 <div class="a" style="left:336px;top:8px;font-size:5px;line-height:6px;color:#f59a0e;white-space:pre">免費試用</div>
 <div class="a" style="left:368px;top:8px;font-size:5px;line-height:6px;color:#fff;white-space:pre">登錄</div>
 <div class="a" style="left:0.5px;top:63px;width:393px;text-align:center;font-size:17.9px;line-height:25px;font-weight:300;color:#f4f4f8;white-space:pre">輕鬆將創意變成
藝術作品</div>
 <div class="a" style="left:32px;top:125.5px;width:290px;font-size:6.6px;line-height:9px;color:#7a84bc;white-space:pre;text-align:right">使用 FotoJet · 滿足你創作平面設計、製作照片拼圖和編輯照片所有需求的超強工具！</div>
 <div class="btn" style="left:62.5px">設計圖片</div>
 <div class="btn" style="left:156.7px">製作拼圖</div>
 <div class="btn" style="left:251.3px">編輯照片</div>
</div>
<div class="a" style="left:948px;top:317px;width:6px;height:224px;background:#e6e6e6"></div>
<div class="a" style="left:948.5px;top:321px;width:4.5px;height:25px;background:#b8b8b8"></div>

<!-- TABLET -->
<div class="a" style="left:374.5px;top:372px;width:272.5px;height:210px;background:#050505;border:1px solid #7a7a7a;border-radius:14px;box-shadow:0 2px 8px rgba(0,0,0,.35)"></div>
<div class="a" style="left:398.5px;top:370px;width:13.5px;height:2.5px;background:#9a9a9a;border-radius:1px"></div>
<div class="a" style="left:417px;top:370px;width:12px;height:2.5px;background:#9a9a9a;border-radius:1px"></div>
<div class="a" style="left:372.5px;top:404px;width:2px;height:17px;background:#8a8a8a;border-radius:1px"></div>
<div class="a" style="left:380px;top:379px;width:259px;height:194px;background:#fff;overflow:hidden;border-radius:4px">
 <svg class="a" style="left:0;top:0" width="259" height="194" viewBox="380 379 259 194">
  <defs>
   <linearGradient id="tg" x1="0" y1="0" x2="0.75" y2="1"><stop offset="0" stop-color="#12bcc8"/><stop offset="0.4" stop-color="#3f7ee6"/><stop offset="0.75" stop-color="#6a4cec"/><stop offset="1" stop-color="#8436ec"/></linearGradient>
  </defs>
  <rect x="380" y="398" width="259" height="1" fill="#eee"/>
  <circle cx="583.5" cy="389" r="3.2" fill="none" stroke="#555" stroke-width="0.8"/>
  <circle cx="594.5" cy="389" r="3.2" fill="none" stroke="#555" stroke-width="0.8"/>
  <rect x="601.8" y="383.6" width="24" height="10.4" rx="1.5" fill="#7d2ae8"/>
  <circle cx="634" cy="390" r="6" fill="#222"/>
  <circle cx="634" cy="388.5" r="2.5" fill="#666"/>
  <rect x="383.5" y="405" width="258" height="67" rx="3" fill="url(#tg)"/>
  <rect x="613" y="410.2" width="24" height="9.4" rx="1.5" fill="#fff" fill-opacity="0.18"/>
  <rect x="431" y="429.3" width="162" height="10.4" rx="1.5" fill="#fff"/>
  <circle cx="436.8" cy="434" r="2" fill="none" stroke="#333" stroke-width="0.8"/>
  <path d="M438.3 435.5 l1.5 1.5" stroke="#333" stroke-width="0.8"/>
  <rect x="575" y="432" width="5" height="4" rx="0.8" fill="none" stroke="#777" stroke-width="0.6"/>
  <circle cx="586.5" cy="434.5" r="2.5" fill="none" stroke="#777" stroke-width="0.6"/>
  <circle cx="406.8" cy="453.5" r="7.2" fill="#fff"/>
  <path d="M406.8 449 l1.2 3.2 l3.2 1.3 l-3.2 1.3 l-1.2 3.2 l-1.2 -3.2 l-3.2 -1.3 l3.2 -1.3z" fill="#7d2ae8"/>
  <g fill="#fff" fill-opacity="0.25">
   <circle cx="436.9" cy="453.5" r="6.5"/><circle cx="466.7" cy="453.5" r="6.5"/><circle cx="497.2" cy="453.5" r="6.5"/><circle cx="527.3" cy="453.5" r="6.5"/><circle cx="557.4" cy="453.5" r="6.5"/><circle cx="587.6" cy="453.5" r="6.5"/><circle cx="617.4" cy="453.5" r="6.5"/>
  </g>
  <g fill="#fff">
   <rect x="434" y="451" width="6" height="5" rx="1"/>
   <rect x="463.5" y="450.5" width="6.5" height="5" rx="1"/>
   <rect x="494" y="451" width="5" height="5" rx="1"/><path d="M499 452.5 l2 -1 v4 l-2 -1z"/>
   <rect x="524" y="451" width="6.5" height="5" rx="1"/>
   <path d="M554.5 452 l4 -2 v7 l-4 -2z"/>
   <rect x="584.5" y="451" width="6.5" height="5.5" rx="1"/>
   <circle cx="614.9" cy="453.5" r="0.8"/><circle cx="617.4" cy="453.5" r="0.8"/><circle cx="619.9" cy="453.5" r="0.8"/>
  </g>
  <g fill="#fff" fill-opacity="0.6">
   <rect x="402" y="463.8" width="9" height="1.2"/><rect x="434.5" y="463.8" width="5" height="1.2"/><rect x="462" y="463.8" width="9" height="1.2"/><rect x="495" y="463.8" width="5" height="1.2"/><rect x="523.5" y="463.8" width="7" height="1.2"/><rect x="555" y="463.8" width="5" height="1.2"/><rect x="584" y="463.8" width="7" height="1.2"/><rect x="615" y="463.8" width="5" height="1.2"/>
  </g>
  <g fill="#eef0f3">
   <rect x="383.5" y="491" width="52" height="39.5" rx="2"/><rect x="441.7" y="491" width="52" height="39.5" rx="2"/><rect x="499.6" y="491" width="52" height="39.5" rx="2"/><rect x="557.7" y="491" width="52.3" height="39.5" rx="2"/><rect x="616" y="491" width="52" height="39.5" rx="2"/>
  </g>
  <rect x="389" y="499" width="40" height="18" rx="1.5" fill="#fff"/>
  <rect x="390" y="500" width="38" height="15.5" fill="#2a2624"/>
  <rect x="405" y="502" width="22" height="12" fill="#8a6048" opacity="0.55"/>
  <rect x="392" y="502.5" width="10" height="1.2" fill="#eee"/><rect x="392" y="505" width="13" height="1" fill="#ddd"/><rect x="392" y="507.5" width="9" height="1" fill="#ccc"/><rect x="392" y="510" width="11" height="1" fill="#ccc"/>
  <rect x="390" y="515.5" width="38" height="1.5" fill="#4ab0c0"/>
  <rect x="448" y="499.5" width="37.5" height="20" fill="#f0d400"/>
  <rect x="466" y="499.5" width="19.5" height="20" fill="#4a6a90"/>
  <path d="M466 519.5 l6 -20 h-2 l-6 20z" fill="#fff"/>
  <circle cx="476" cy="507" r="2.5" fill="#c89070"/><rect x="471" y="510" width="10" height="9" fill="#2a2a2a"/>
  <rect x="470" y="514" width="12" height="5" fill="#8a6a50"/>
  <rect x="450" y="503" width="14" height="2" fill="#222"/><rect x="450" y="506.5" width="12" height="2" fill="#222"/>
  <path d="M507 500 l16 -1.5 l3 26 l-16 1.5z" fill="#e8e8ec" opacity="0.7"/>
  <path d="M512 497 l16 -2 l3 25 l-16 2z" fill="#fbeee8"/>
  <circle cx="521.5" cy="508" r="3.5" fill="#f4c8c8"/><circle cx="521.5" cy="507" r="1.6" fill="#3a2a2a"/>
  <path d="M514 515 q8 -4 16 0 l1 5 l-16 2z" fill="#8ab4d8"/>
  <rect x="516" y="499" width="10" height="1.5" fill="#e890a0"/>
  <path d="M566 513 l24 -3 l6 8 l-24 4z" fill="#fff" opacity="0.95"/>
  <path d="M565 502 l24 -2 l2 13 l-24 2z" fill="#ece4cc"/>
  <circle cx="568" cy="503.5" r="2.5" fill="#7a8a30"/><circle cx="587" cy="511" r="2.5" fill="#7a8a30"/><circle cx="589" cy="501.5" r="1.8" fill="#7a8a30"/>
  <rect x="573" y="506" width="9" height="1.3" fill="#c8a050"/>
  <path d="M626 505 l14 -4 v22 l-10 2z" fill="#6ac0b0"/>
  <path d="M622 506 l4 -1 l4 20 l-4 1z" fill="#fff"/>
  <g fill="#777">
   <rect x="384" y="533.8" width="5" height="1.3"/><rect x="442" y="533.8" width="14" height="1.3"/><rect x="500" y="533.8" width="5" height="1.3"/><rect x="558" y="533.8" width="5" height="1.3"/><rect x="617" y="533.8" width="5" height="1.3"/>
  </g>
  <circle cx="641" cy="562" r="6" fill="#8a3cf0"/>
 </svg>
 <div class="a" style="left:-3px;top:6px;font-size:4.5px;line-height:6px;color:#555;white-space:pre">宅 ⌄      優化</div>
 <div class="a" style="left:225px;top:6.5px;font-size:4px;line-height:5px;color:#fff;white-space:pre">建立設計</div>
 <div class="a" style="left:94px;top:32px;font-size:9.6px;line-height:12px;color:#fff;white-space:pre">你想要設計些什麼？</div>
 <div class="a" style="left:236.5px;top:32.5px;font-size:4px;line-height:5px;color:#fff;white-space:pre">自訂尺寸</div>
 <div class="a" style="left:63px;top:52.5px;font-size:4.2px;line-height:5px;color:#999;white-space:pre">搜尋你在 Canva 的內容</div>
 <div class="a" style="left:3.5px;top:101px;font-size:6px;line-height:8px;color:#333;white-space:pre">你可能會想嘗試...</div>
 <div class="a" style="left:3.5px;top:173.5px;font-size:7.2px;line-height:9px;color:#222;font-weight:500;white-space:pre">最近的設計</div>
</div>

<!-- PHONE -->
<div class="a" style="left:937.5px;top:411.5px;width:83px;height:170.5px;background:#060606;border:1px solid #7a7a7a;border-radius:9px;box-shadow:0 2px 8px rgba(0,0,0,.35)"></div>
<div class="a" style="left:1020px;top:465.5px;width:2px;height:11px;background:#777"></div>
<div class="a" style="left:941.5px;top:415px;width:76px;height:163px;border-radius:6px;overflow:hidden;background:#1a80d8">
 <svg width="76" height="163" viewBox="0 0 76 163">
  <defs>
   <filter id="ice" x="0" y="0" width="100%" height="100%" color-interpolation-filters="sRGB">
    <feTurbulence type="fractalNoise" baseFrequency="0.16" numOctaves="3" seed="5" result="n"/>
    <feColorMatrix type="matrix" values="0 0 0 0 0.85  0 0 0 0 0.95  0 0 0 0 1  2.6 0 0 0 -1.25" in="n"/>
   </filter>
   <filter id="ice2" x="0" y="0" width="100%" height="100%" color-interpolation-filters="sRGB">
    <feTurbulence type="fractalNoise" baseFrequency="0.12" numOctaves="3" seed="9" result="n"/>
    <feColorMatrix type="matrix" values="0 0 0 0 0.02  0 0 0 0 0.3  0 0 0 0 0.66  2.0 0 0 0 -0.95" in="n"/>
   </filter>
   <filter id="bl"><feGaussianBlur stdDeviation="5"/></filter>
   <linearGradient id="pg" x1="0" y1="0" x2="0.4" y2="1">
    <stop offset="0" stop-color="#2aaaf0"/><stop offset="0.3" stop-color="#38a8ec"/><stop offset="0.55" stop-color="#1670cc"/><stop offset="0.8" stop-color="#1a86dc"/><stop offset="1" stop-color="#2a9ae0"/>
   </linearGradient>
  </defs>
  <rect width="76" height="163" fill="url(#pg)"/>
  <g filter="url(#bl)">
   <ellipse cx="30" cy="50" rx="30" ry="18" fill="#f4faff" opacity="1"/>
   <ellipse cx="12" cy="80" rx="14" ry="12" fill="#e8f4fc" opacity="0.8"/>
   <ellipse cx="55" cy="8" rx="22" ry="10" fill="#50c8f8" opacity="0.7"/>
   <ellipse cx="20" cy="125" rx="24" ry="22" fill="#0a48a8" opacity="0.8"/>
   <ellipse cx="62" cy="95" rx="12" ry="18" fill="#48b8f4" opacity="0.7"/>
   <ellipse cx="58" cy="150" rx="18" ry="12" fill="#3a98d8" opacity="0.6"/>
   <ellipse cx="40" cy="100" rx="10" ry="8" fill="#1a60c0" opacity="0.6"/>
  </g>
  <rect width="76" height="163" filter="url(#ice2)"/>
  <rect width="76" height="163" filter="url(#ice)" opacity="0.55"/>
 </svg>
</div>
<!-- GUIDES -->
<svg class="a" style="left:0;top:0" width="1268" height="664" viewBox="0 0 1268 664">
 <g stroke="#f5845c" stroke-width="1" stroke-dasharray="2 2" fill="none" stroke-opacity="0.74">
  <path d="M162 208.5 H1250 M162 582.5 H1250"/>
  <path d="M357.5 150 V639 M402.5 150 V639 M672.5 150 V639 M706.5 150 V639 M742.5 150 V639 M1011.5 150 V639 M1056.5 150 V639"/>
 </g>
</svg>
<!-- RIGHT SCROLLBAR -->
<div class="a" style="left:1251px;top:151px;width:16px;height:420px;background:#343434"></div>
<div class="a" style="left:1251px;top:152px;width:16px;height:16px;background:#4a4a4a"></div>
<div class="a" style="left:1251px;top:355px;width:16px;height:16px;background:#5d5d5d"></div>
<div class="a" style="left:1251px;top:571px;width:16px;height:16px;background:#4a4a4a"></div>
<svg class="a" style="left:1251px;top:151px" width="16" height="480" viewBox="0 0 16 480">
 <path d="M4.5 10.5 l3.5 -3.5 l3.5 3.5z" fill="#9a9a9a"/>
 <path d="M4.5 426 l3.5 3.5 l3.5 -3.5z" fill="#9a9a9a"/>
 <path d="M4.5 445 l3.5 -4 l3.5 4z M4.5 449.5 l3.5 -4 l3.5 4z" fill="#9a9a9a"/>
 <path d="M4.5 458 l3.5 4 l3.5 -4z M4.5 462.5 l3.5 4 l3.5 -4z" fill="#9a9a9a"/>
 <path d="M4 444.5 h8 M4 462 h8" stroke="#9a9a9a" stroke-width="1"/>
</svg>
<!-- STATUS BAR -->
<div class="a" style="left:0;top:641px;width:1268px;height:1px;background:#4a4a4a"></div>
<div class="a" style="left:0;top:642px;width:1268px;height:22px;background:#262626"></div>
<div class="a" style="left:0;top:643px;width:1268px;height:1px;background:#3a3a3a"></div>
<div class="t" style="left:5px;top:646px;color:#e0e0e0">投影片 17 / 34</div>
<svg class="a" style="left:95px;top:647px" width="17" height="13" viewBox="0 0 17 13">
 <path d="M1.5 1.5 h8 v10 h-8z M9.5 1.5 v10" fill="none" stroke="#d8d8d8" stroke-width="1"/>
 <path d="M11 4 l4.5 5 M15.5 4 l-4.5 5" stroke="#d8d8d8" stroke-width="1.2"/>
</svg>
<div class="t" style="left:123px;top:646px;color:#e0e0e0">英文 (美國)</div>
<svg class="a" style="left:842px;top:647px" width="12" height="13" viewBox="0 0 12 13">
 <path d="M1 5.5 h10 M1 8 h10 M1 10.5 h10 M3 3 l2.5 -2 l2.5 2" fill="none" stroke="#d0d0d0" stroke-width="0.9"/>
</svg>
<div class="t" style="left:858px;top:646px;color:#e0e0e0">備忘稿</div>
<svg class="a" style="left:907px;top:646px" width="16" height="14" viewBox="0 0 16 14">
 <path d="M1 1 h14 v9 h-8 l-4 3.5 v-3.5 h-2z" fill="#e0e0e0"/>
</svg>
<div class="t" style="left:925px;top:646px;color:#e0e0e0">註解</div>
<div class="a" style="left:965px;top:643px;width:28px;height:21px;background:#3e3e3e"></div>
<svg class="a" style="left:965px;top:643px" width="120" height="21" viewBox="965 643 120 21">
 <rect x="972.5" y="647.5" width="13" height="11" fill="none" stroke="#e8e8e8" stroke-width="1.4"/>
 <rect x="976.5" y="650" width="7" height="5" fill="#e8e8e8"/>
 <rect x="1002" y="647.5" width="5.5" height="5" fill="#e8e8e8"/><rect x="1009" y="647.5" width="5.5" height="5" fill="#e8e8e8"/>
 <rect x="1002" y="654" width="5.5" height="5" fill="#e8e8e8"/><rect x="1009" y="654" width="5.5" height="5" fill="#e8e8e8"/>
 <path d="M1031.5 648 h12.5 v11 h-12.5z M1037.75 648 v11 M1033 650.5 h3 M1033 652.5 h3 M1033 654.5 h3 M1039.5 650.5 h3 M1039.5 652.5 h3 M1039.5 654.5 h3" fill="none" stroke="#d0d0d0" stroke-width="0.9"/>
 <path d="M1060.5 648 h13 M1061.5 648 v6.5 h11 v-6.5 M1067 654.5 v3 M1064 659 l3 -1.5 l3 1.5" fill="none" stroke="#d8d8d8" stroke-width="1.1"/>
</svg>
<svg class="a" style="left:1080px;top:643px" width="188" height="21" viewBox="1080 643 188 21">
 <path d="M1087 653.5 h7" stroke="#e8e8e8" stroke-width="1.6"/>
 <path d="M1097.5 653.5 h97.5" stroke="#e8e8e8" stroke-width="1.4"/>
 <path d="M1146.5 649.5 v7.5" stroke="#e8e8e8" stroke-width="1"/>
 <rect x="1126.5" y="648.5" width="5.5" height="11.5" fill="#f2f2f2"/>
 <path d="M1199 654 h8.5 M1203.25 649.8 v8.5" stroke="#e8e8e8" stroke-width="1.6"/>
 <path d="M1251 648 h11 v11 h-11z" fill="none" stroke="#d8d8d8" stroke-width="1.1"/>
 <path d="M1251 648 l3.5 3.5 M1262 648 l-3.5 3.5 M1251 659 l3.5 -3.5 M1262 659 l-3.5 -3.5 M1253.5 651.5 h2 v-2 M1259.5 651.5 h-2 v-2 M1253.5 655.5 h2 v2 M1259.5 655.5 h-2 v2" fill="none" stroke="#d8d8d8" stroke-width="1"/>
</svg>
<div class="a" style="left:1214px;top:646px;font-size:12.5px;line-height:16px;color:#e8e8e8;white-space:pre">67%</div>
</body></html>
